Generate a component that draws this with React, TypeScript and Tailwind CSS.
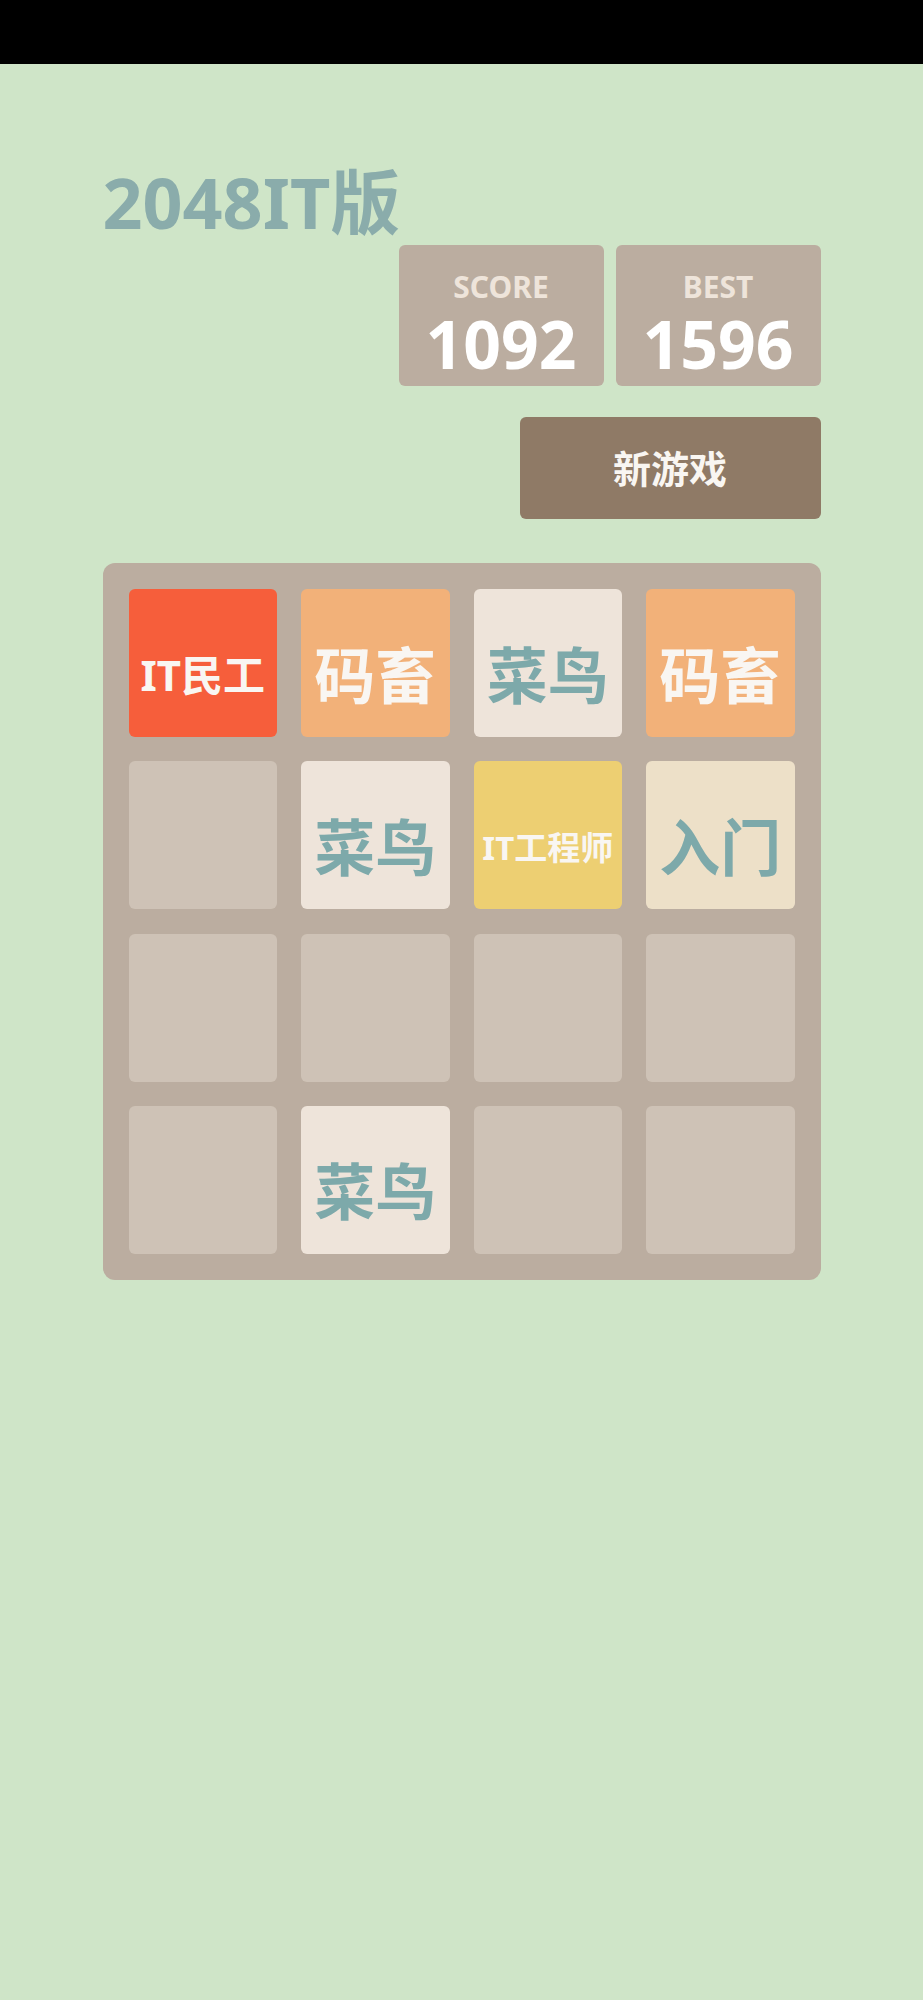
import React from "react";

type Tile = { label: string; bg: string; color: string; size: string } | null;

const T2 = { label: "菜鸟", bg: "bg-[#eee4da]", color: "text-[#7da9aa]", size: "text-[61px]" };
const T4 = { label: "入门", bg: "bg-[#ede0c8]", color: "text-[#7da9aa]", size: "text-[61px]" };
const T8 = { label: "码畜", bg: "bg-[#f2b179]", color: "text-[#f9f6f2]", size: "text-[61px]" };
const T32 = { label: "IT民工", bg: "bg-[#f65e3b]", color: "text-[#f9f6f2]", size: "text-[42px]" };
const T128 = { label: "IT工程师", bg: "bg-[#edcf72]", color: "text-[#f9f6f2]", size: "text-[33px]" };

const grid: Tile[] = [
  T32, T8, T2, T8,
  null, T2, T128, T4,
  null, null, null, null,
  null, T2, null, null,
];

export default function App() {
  return (
    <div
      className="min-h-[2000px] w-full bg-[#cfe5c8]"
      style={{ fontFamily: '"Noto Sans", "Noto Sans CJK SC", sans-serif' }}
    >
      <div className="h-[64px] w-full bg-black" />
      <div className="mx-auto w-[718px] pt-[103px]">
        <div className="h-[68px] text-[70px] font-bold leading-none text-[#8aacab]">2048IT版</div>
        <div className="mt-[10px] flex justify-end gap-[12px]">
          <div className="flex h-[141px] w-[205px] flex-col items-center rounded-[6px] bg-[#bbada0] pt-[27px]">
            <div className="h-[30px] text-[30px] font-bold leading-none text-[#eee4da]">SCORE</div>
            <div className="mt-[8px] h-[66px] text-[66px] font-bold leading-none text-white">1092</div>
          </div>
          <div className="flex h-[141px] w-[205px] flex-col items-center rounded-[6px] bg-[#bbada0] pt-[27px]">
            <div className="h-[30px] text-[30px] font-bold leading-none text-[#eee4da]">BEST</div>
            <div className="mt-[8px] h-[66px] text-[66px] font-bold leading-none text-white">1596</div>
          </div>
        </div>
        <div className="mt-[31px] flex justify-end">
          <div className="flex h-[102px] w-[301px] items-center justify-center rounded-[6px] bg-[#8f7a66] text-[38px] font-bold text-[#f9f6f2]">
            新游戏
          </div>
        </div>
        <div className="mt-[44px] grid h-[717px] grid-cols-4 gap-[24px] rounded-[12px] bg-[#bbada0] p-[26px]">
          {grid.map((t, i) => (
            <div
              key={i}
              className={`flex h-[148px] items-center justify-center rounded-[6px] pt-[24px] ${t ? t.bg : "bg-[#cec2b6]"}`}
            >
              {t && (
                <span className={`${t.size} ${t.color} font-bold leading-none`}>{t.label}</span>
              )}
            </div>
          ))}
        </div>
      </div>
    </div>
  );
}
